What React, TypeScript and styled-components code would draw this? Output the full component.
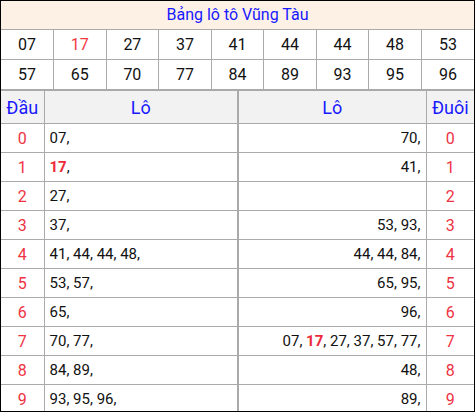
import styled, { createGlobalStyle } from "styled-components";

const GlobalStyle = createGlobalStyle`
    html, body {
        margin: 0;
        padding: 0;
        background: #ffffff;
    }
    body {
        font-family: Roboto, "Liberation Sans", Arial, sans-serif;
    }
`;

const Board = styled.div`
    width: 475px;
    height: 412px;
    box-sizing: border-box;
    border: 1px solid #000;
    overflow: hidden;
    background: #fff;
`;

const Title = styled.div`
    height: 28px;
    line-height: 28px;
    text-align: center;
    background: #fdf1e6;
    color: #1919ff;
    font-size: 16px;
    border-bottom: 1px solid #aaa;
`;

const NumTable = styled.table`
    width: 100%;
    border-collapse: collapse;
    table-layout: fixed;
    border-bottom: 1px solid #aaa;
`;

const NumCell = styled.td<{ $hot?: boolean }>`
    height: 29px;
    padding: 0;
    text-align: center;
    font-size: 16px;
    color: ${(p) => (p.$hot ? "#f2383f" : "#111")};
    border-left: 1px solid #aaa;
    border-bottom: 1px solid #aaa;
    &:first-child {
        border-left: none;
    }
`;

const LotoTable = styled.table`
    width: 100%;
    border-collapse: collapse;
    table-layout: fixed;
`;

const HeadCell = styled.th<{ $split?: boolean }>`
    height: 32px;
    padding: 0;
    font-weight: normal;
    font-size: 18px;
    color: #1919ff;
    background: #f2f2f2;
    border-top: 1px solid #aaa;
    border-bottom: 1px solid #aaa;
    border-left: 1px solid #aaa;
    border-right: ${(p) => (p.$split ? "2px" : "1px")} solid #aaa;
    &:first-child {
        border-left: none;
    }
    &:last-child {
        border-right: none;
    }
`;

const DigitCell = styled.td`
    height: 28px;
    padding: 0;
    text-align: center;
    font-size: 16px;
    color: #ee3344;
    border-bottom: 1px solid #aaa;
    border-left: 1px solid #aaa;
    &:first-child {
        border-left: none;
    }
`;

const ListCell = styled.td<{ $right?: boolean; $split?: boolean }>`
    height: 28px;
    padding: 0 5px;
    font-size: 15px;
    color: #111;
    white-space: nowrap;
    text-align: ${(p) => (p.$right ? "right" : "left")};
    border-bottom: 1px solid #aaa;
    border-left: 1px solid #aaa;
    border-right: ${(p) => (p.$split ? "2px solid #aaa" : "none")};
`;

const Hot = styled.b`
    color: #ee2a3a;
    font-weight: bold;
`;

const drawn = ["07", "17", "27", "37", "41", "44", "44", "48", "53", "57", "65", "70", "77", "84", "89", "93", "95", "96"];
const special = "17";

const heads: string[][] = [
    ["07"], ["17"], ["27"], ["37"], ["41", "44", "44", "48"],
    ["53", "57"], ["65"], ["70", "77"], ["84", "89"], ["93", "95", "96"],
];
const tails: string[][] = [
    ["70"], ["41"], [], ["53", "93"], ["44", "44", "84"],
    ["65", "95"], ["96"], ["07", "17", "27", "37", "57", "77"], ["48"], ["89"],
];

function NumList({ items }: { items: string[] }) {
    return (
        <>
            {items.map((n, i) => (
                <span key={i}>
                    {n === special ? <Hot>{n}</Hot> : n}
                    {","}
                    {i < items.length - 1 ? " " : ""}
                </span>
            ))}
        </>
    );
}

export default function App() {
    const rows = [drawn.slice(0, 9), drawn.slice(9)];
    return (
        <>
            <GlobalStyle />
            <Board>
                <Title>Bảng lô tô Vũng Tàu</Title>
                <NumTable>
                    <tbody>
                        {rows.map((r, ri) => (
                            <tr key={ri}>
                                {r.map((n, i) => (
                                    <NumCell key={i} $hot={n === special}>{n}</NumCell>
                                ))}
                            </tr>
                        ))}
                    </tbody>
                </NumTable>
                <LotoTable>
                    <colgroup>
                        <col style={{ width: 43 }} />
                        <col style={{ width: 194 }} />
                        <col style={{ width: 188 }} />
                        <col />
                    </colgroup>
                    <thead>
                        <tr>
                            <HeadCell>Đầu</HeadCell>
                            <HeadCell $split>Lô</HeadCell>
                            <HeadCell>Lô</HeadCell>
                            <HeadCell>Đuôi</HeadCell>
                        </tr>
                    </thead>
                    <tbody>
                        {heads.map((h, d) => (
                            <tr key={d}>
                                <DigitCell>{d}</DigitCell>
                                <ListCell $split><NumList items={h} /></ListCell>
                                <ListCell $right><NumList items={tails[d]} /></ListCell>
                                <DigitCell>{d}</DigitCell>
                            </tr>
                        ))}
                    </tbody>
                </LotoTable>
            </Board>
        </>
    );
}
